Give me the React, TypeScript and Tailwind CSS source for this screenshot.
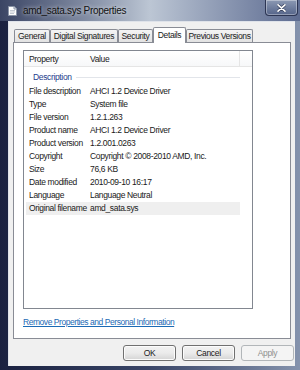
const rows: [string, string][] = [
  ['File description', 'AHCI 1.2 Device Driver'],
  ['Type', 'System file'],
  ['File version', '1.2.1.263'],
  ['Product name', 'AHCI 1.2 Device Driver'],
  ['Product version', '1.2.001.0263'],
  ['Copyright', 'Copyright © 2008-2010 AMD, Inc.'],
  ['Size', '76,6 KB'],
  ['Date modified', '2010-09-10 16:17'],
  ['Language', 'Language Neutral'],
  ['Original filename', 'amd_sata.sys'],
]

const tabs = [
  { label: 'General', w: 'w-[36px]' },
  { label: 'Digital Signatures', w: 'w-[68px]' },
  { label: 'Security', w: 'w-[35px]' },
  { label: 'Details', w: 'w-[33px]', active: true },
  { label: 'Previous Versions', w: 'w-[67px]' },
]

function FileIcon() {
  return (
    <svg width="9" height="10" viewBox="0 0 9 10">
      <path d="M0.5 0.5 H6 L8.5 3 V9.5 H0.5 Z" fill="#fdfdfd" stroke="#8a94a6" />
      <path d="M6 0.5 V3 H8.5" fill="#dfe4ec" stroke="#8a94a6" />
      <path d="M2 4.5 H7 M2 6 H7 M2 7.5 H6" stroke="#b5bcc8" strokeWidth="0.8" />
    </svg>
  )
}

export default function App() {
  return (
    <div
      className="w-[300px] h-[370px] overflow-hidden bg-gradient-to-r from-[#1a2140] via-[#3a4668] to-[#8593ad] text-[#1a1a1a]"
      style={{ fontFamily: '"Liberation Sans", Arial, sans-serif' }}
    >
      {/* Title bar */}
      <div className="h-[21px] flex items-start bg-gradient-to-r from-[#3b4564] via-[#bcc6d4] to-[#5d6b90]">
        <div className="flex items-center h-[21px] pl-[8px] gap-[6px]">
          <FileIcon />
          <span className="text-[10px] tracking-[-0.3px] text-[#111] [text-shadow:0_0_4px_rgba(255,255,255,0.8)]">
            amd_sata.sys Properties
          </span>
        </div>
        <div className="ml-auto mr-[2px] w-[33px] h-[16px] rounded-b-[4px] border border-t-0 border-[#2c3553] bg-gradient-to-b from-[#8c99b3] to-[#56658a] shadow-[inset_0_0_0_1px_rgba(255,255,255,0.35)] flex items-center justify-center">
          <svg width="9" height="8" viewBox="0 0 9 8">
            <path d="M1 0.8 L8 7.2 M8 0.8 L1 7.2" stroke="#3a4460" strokeWidth="3" strokeLinecap="round" />
            <path d="M1 0.8 L8 7.2 M8 0.8 L1 7.2" stroke="#ffffff" strokeWidth="1.6" strokeLinecap="round" />
          </svg>
        </div>
      </div>

      {/* Client area */}
      <div className="ml-[8px] mr-[5px] h-[345px] bg-[#f0f0f0] border-t border-l border-[#dfe3ea] pt-[5px] text-[8.5px] tracking-[-0.35px]">
        {/* Tabs */}
        <div className="flex items-end ml-[5px] relative z-10">
          {tabs.map(t =>
            t.active ? (
              <div
                key={t.label}
                className={`${t.w} h-[16px] -mb-px bg-white border border-b-0 border-[#898c95] rounded-t-[2px] flex items-center justify-center`}
              >
                {t.label}
              </div>
            ) : (
              <div
                key={t.label}
                className={`${t.w} h-[13px] bg-gradient-to-b from-[#f4f4f4] to-[#e2e2e2] border border-b-0 border-[#898c95] rounded-t-[2px] flex items-center justify-center`}
              >
                {t.label}
              </div>
            )
          )}
        </div>

        {/* Tab panel */}
        <div className="ml-[4px] mr-[4px] h-[297px] bg-white border border-[#898c95] pt-[7px] pl-[9px]">
          {/* List */}
          <div className="w-[230px] h-[259px] border border-[#828790] bg-white">
            <div className="h-[16px] flex border-b border-[#e5e5e5] bg-gradient-to-b from-white to-[#f7f8f9]">
              <div className="w-[61px] pl-[5px] flex items-center pt-[1px]">Property</div>
              <div className="w-[155px] pl-[5px] flex items-center pt-[1px] border-r border-[#e5e5e5]">Value</div>
            </div>
            <div className="mt-[2px] h-[16px] flex items-center pl-[9px] pr-[12px] gap-[4px]">
              <span className="text-[#1e3c8c]">Description</span>
              <div className="flex-1 h-px bg-[#e2e5ea]" />
            </div>
            {rows.map(([k, v], i) => (
              <div
                key={k}
                className={`h-[13px] ml-[2px] w-[214px] flex items-center ${i === rows.length - 1 ? 'bg-[#efefef]' : ''}`}
              >
                <div className="w-[59px] pl-[3px] whitespace-nowrap">{k}</div>
                <div className="pl-[5px] whitespace-nowrap">{v}</div>
              </div>
            ))}
          </div>

          <div className="mt-[8px] h-[11px] flex items-center">
            <span className="text-[#1b6ab5] underline tracking-[-0.45px]">Remove Properties and Personal Information</span>
          </div>
        </div>

        {/* Buttons */}
        <div className="flex justify-end gap-[6px] mt-[6px] mr-[1px]">
          <button className="w-[53px] h-[16px] rounded-[3px] border border-[#707070] bg-gradient-to-b from-[#f2f2f2] via-[#ebebeb] to-[#d4d4d4] shadow-[inset_0_0_0_1px_#fcfcfc] flex items-center justify-center">
            OK
          </button>
          <button className="w-[53px] h-[16px] rounded-[3px] border border-[#707070] bg-gradient-to-b from-[#f2f2f2] via-[#ebebeb] to-[#d4d4d4] shadow-[inset_0_0_0_1px_#fcfcfc] flex items-center justify-center">
            Cancel
          </button>
          <button className="w-[53px] h-[16px] rounded-[3px] border border-[#b2b6b9] bg-[#f4f4f4] text-[#8f8f8f] flex items-center justify-center">
            Apply
          </button>
        </div>
      </div>
    </div>
  )
}
